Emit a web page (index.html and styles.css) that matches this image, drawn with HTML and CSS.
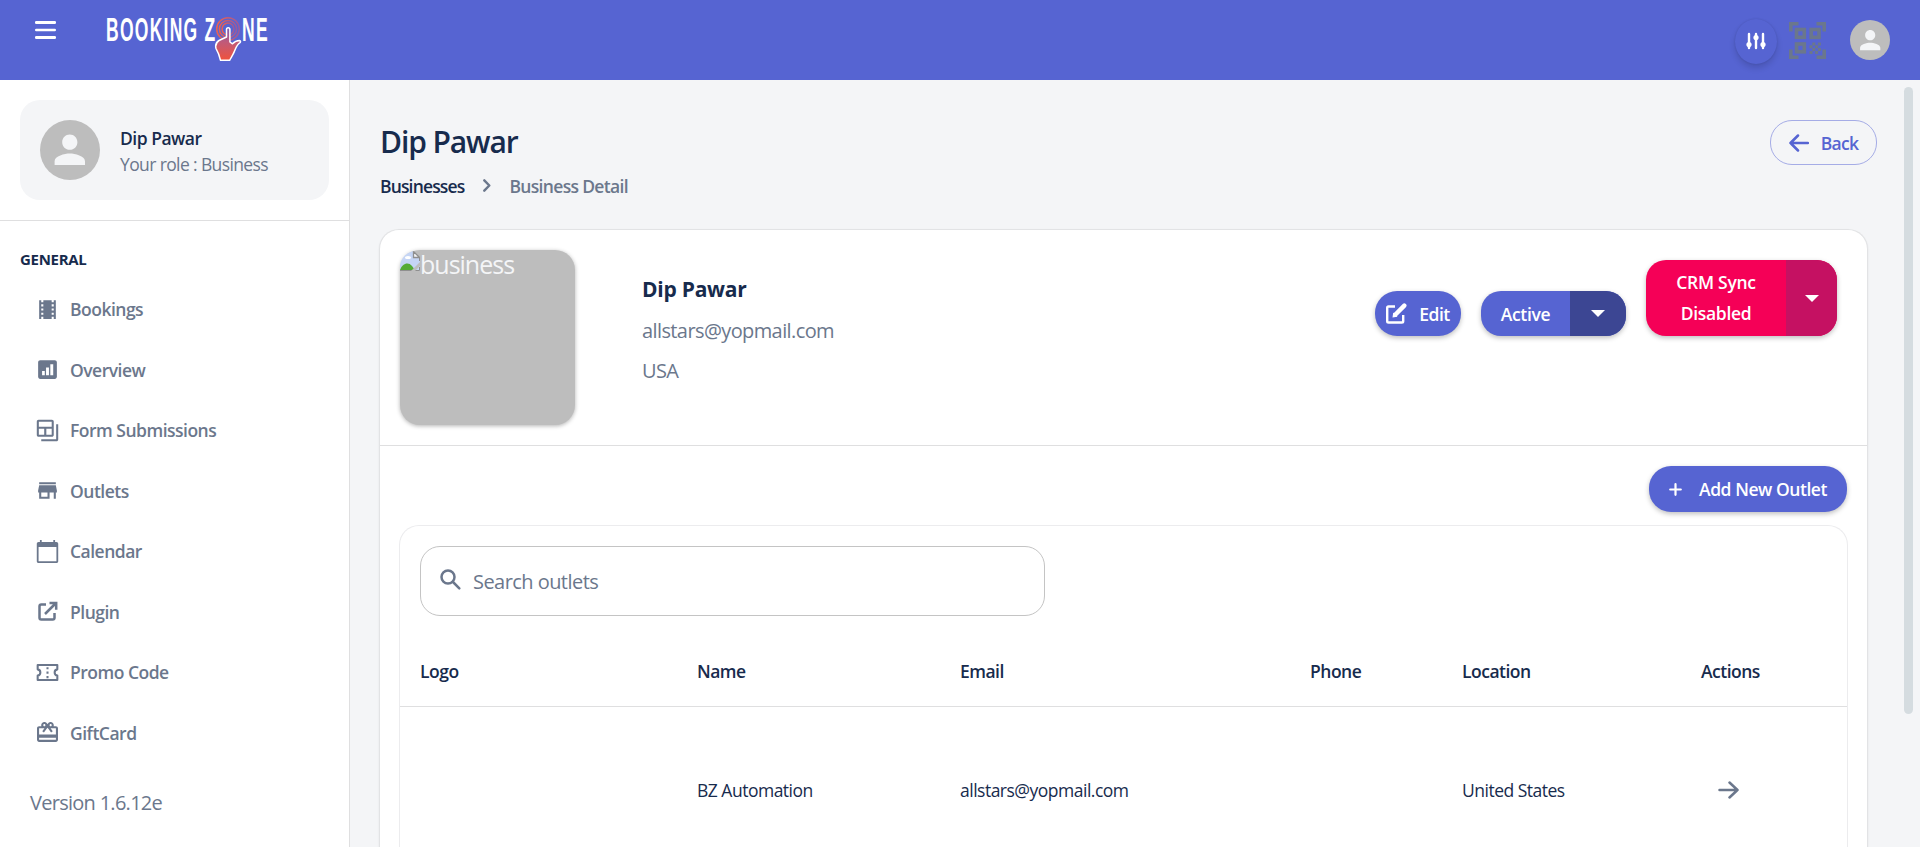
FILE: index.html
```html
<!DOCTYPE html>
<html lang="en">
<head>
<meta charset="utf-8">
<title>Booking Zone</title>
<link rel="stylesheet" href="styles.css">
</head>
<body>
<header class="topbar">
  <button class="menu-btn" aria-label="Menu"><svg width="21" height="19" viewBox="0 0 21 19" fill="#fff"><rect width="21" height="3" rx="1.2"/><rect y="7.7" width="21" height="2.6" rx="1.2"/><rect y="15" width="21" height="3" rx="1.2"/></svg></button>
  <div class="brand">
    <span class="brand-word">BOOKING Z</span>
    <svg class="brand-mark" width="28" height="46" viewBox="0 0 28 46" fill="none">
      <defs>
        <linearGradient id="ring" x1="0" x2="1"><stop offset="0" stop-color="#f0604d"/><stop offset="1" stop-color="#9a5a9c"/></linearGradient>
        <linearGradient id="hand" x1="0" y1="0" x2="0" y2="1"><stop offset="0" stop-color="#7c5cb8"/><stop offset=".45" stop-color="#c15a78"/><stop offset="1" stop-color="#f0523c"/></linearGradient>
      </defs>
      <g stroke="url(#ring)" stroke-width="1.500"><circle cx="14" cy="13" r="11.300"/><circle cx="14" cy="13" r="8.600"/><circle cx="14" cy="13" r="5.900"/></g>
      <path d="M12.500 13.500c0-2.400 3.400-2.400 3.400 0v12.500l2.600 1.800c2-2.200 4.600-3.300 7-3.300 1.200.2 1.200 1.500.5 2.100-3.200 2-4.200 5.400-5.700 9-1.200 3-3 5.500-4.700 8.700H6.500L4.600 38 2 32.500c-.8-3 .2-6.200 3-8l7.500-3.500z" fill="url(#hand)" stroke="#fff" stroke-width="1.500" stroke-linejoin="round"/>
    </svg>
    <span class="brand-word">NE</span>
  </div>
  <div class="top-actions">
    <button class="round-btn" aria-label="Settings"><svg width="20" height="18" viewBox="0 0 20 18" stroke="#fff" stroke-width="2.400" stroke-linecap="round" fill="#fff"><path d="M3 2v14M10 2v14M17 2v14"/><g stroke="none"><circle cx="3" cy="12.500" r="2.600"/><circle cx="10" cy="5.500" r="2.600"/><circle cx="17" cy="12.500" r="2.600"/></g></svg></button>
    <svg class="qr" width="37" height="37" viewBox="0 0 37 37" fill="none" stroke="#6b778c" stroke-width="3.600"><path d="M1.800 9.500V1.800H9.500M27.500 1.800h7.700V9.500M35.200 27.500v7.700h-7.700M9.500 35.200H1.800v-7.700"/><rect x="7.500" y="7.500" width="7.800" height="7.800"/><rect x="22.200" y="7.500" width="7.800" height="7.800"/><rect x="7.500" y="22" width="7.800" height="7.800"/><g fill="#6b778c" stroke="none"><path d="M23.300 20.500h3v3h-3zM28.900 20.500h3v3h-3zM20.500 23.300h3v3h-3zM26.100 23.300h3v3h-3zM23.300 26.100h3v3h-3zM28.900 26.100h3v3h-3zM26.100 28.900h3v3h-3zM20.500 28.900h3v3h-3z"/></g></svg>
    <div class="avatar avatar-sm"><svg viewBox="0 0 24 24" fill="currentColor"><path d="M12 12c2.210 0 4-1.790 4-4s-1.790-4-4-4-4 1.790-4 4 1.790 4 4 4zm0 2c-2.670 0-8 1.340-8 4v2h16v-2c0-2.660-5.330-4-8-4z"/></svg></div>
  </div>
</header>
<div class="shell">
  <aside class="sidebar">
    <div class="profile">
      <div class="avatar avatar-lg"><svg viewBox="0 0 24 24" fill="currentColor"><path d="M12 12c2.210 0 4-1.790 4-4s-1.790-4-4-4-4 1.790-4 4 1.790 4 4 4zm0 2c-2.670 0-8 1.340-8 4v2h16v-2c0-2.660-5.330-4-8-4z"/></svg></div>
      <div><div class="profile-name">Dip Pawar</div><div class="profile-role">Your role : Business</div></div>
    </div>
    <nav class="nav">
      <div class="nav-title">GENERAL</div>
      <a class="nav-item"><svg viewBox="0 0 24 24"><path d="M18 3v2h-2V3H8v2H6V3H4v18h2v-2h2v2h8v-2h2v2h2V3h-2zM8 17H6v-2h2v2zm0-4H6v-2h2v2zm0-4H6V7h2v2zm10 8h-2v-2h2v2zm0-4h-2v-2h2v2zm0-4h-2V7h2v2z"/></svg><span>Bookings</span></a>
      <a class="nav-item"><svg viewBox="0 0 24 24"><path fill-rule="evenodd" d="M19 3H5c-1.100 0-2 .9-2 2v14c0 1.100.9 2 2 2h14c1.100 0 2-.9 2-2V5c0-1.100-.9-2-2-2zM9.400 17.500H6.800v-4h2.600zM13.400 17.500h-2.800V10h2.800zM17.500 17.500h-2.800V7h2.800z"/></svg><span>Overview</span></a>
      <a class="nav-item"><svg viewBox="-2 -2 28 28"><path fill-rule="evenodd" d="M2 0h15c1.100 0 2 .9 2 2v15c0 1.100-.9 2-2 2H2c-1.100 0-2-.9-2-2V2C0 .9.900 0 2 0zm.3 2.300v5.400h14.400V2.300zm0 7.700v6.700h6V10zm8.400 0v6.700h6V10zM21.700 5H24v17c0 1.100-.9 2-2 2H5v-2.300h16.700z"/></svg><span>Form Submissions</span></a>
      <a class="nav-item"><svg viewBox="0 0 24 24"><path d="M20 4H4v2h16V4zm1 10v-2l-1-5H4l-1 5v2h1v6h10v-6h4v6h2v-6h1zm-9 4H6v-4h6v4z"/></svg><span>Outlets</span></a>
      <a class="nav-item"><svg viewBox="-2 -2 28 28"><path fill-rule="evenodd" d="M3.500-1h2v2.500h13V-1h2v2.500H22c1.100 0 2 .9 2 2V23c0 1.100-.9 2-2 2H2c-1.100 0-2-.9-2-2V3.500c0-1.100.9-2 2-2h1.500zM2 7v16h20V7z"/></svg><span>Calendar</span></a>
      <a class="nav-item"><svg class="line" viewBox="-.5 -.5 25 25" stroke-width="2.500"><path d="M10.500 5H5.800C4.700 5 4 5.700 4 6.800v11.400C4 19.300 4.700 20 5.800 20h11.400c1.100 0 1.800-.7 1.800-1.800v-4.700M9.500 14.500L20 4M14 3.500h6.700v6.700"/></svg><span>Plugin</span></a>
      <a class="nav-item"><svg class="line" viewBox="-2 -2 28 28" stroke-width="2.300"><path d="M1 3.500h22v5c-2 .3-3 1.700-3 3.500s1 3.200 3 3.500v5H1v-5c2-.3 3-1.700 3-3.500s-1-3.200-3-3.500z" stroke-linejoin="round"/><path d="M12 6v2.500M12 11v2.500M12 16v2.500"/></svg><span>Promo Code</span></a>
      <a class="nav-item"><svg class="gift" viewBox="2 2 20 20"><path d="M20 6h-2.180c.11-.31.18-.65.18-1 0-1.660-1.340-3-3-3-1.050 0-1.960.54-2.500 1.350l-.5.670-.5-.68C10.960 2.540 10.050 2 9 2 7.340 2 6 3.340 6 5c0 .35.070.69.180 1H4c-1.110 0-1.990.89-1.990 2L2 19c0 1.110.89 2 2 2h16c1.110 0 2-.89 2-2V8c0-1.110-.89-2-2-2zm-5-2c.55 0 1 .45 1 1s-.45 1-1 1-1-.45-1-1 .45-1 1-1zM9 4c.55 0 1 .45 1 1s-.45 1-1 1-1-.45-1-1 .45-1 1-1zm11 15H4v-2h16v2zm0-5H4V8h5.080L7 10.830 8.620 12 11 8.760l1-1.360 1 1.360L15.380 12 17 10.830 14.920 8H20v6z"/></svg><span>GiftCard</span></a>
    </nav>
    <div class="version">Version 1.6.12e</div>
  </aside>
  <main class="main">
    <div class="page-head">
      <div>
        <h1 class="page-title">Dip Pawar</h1>
        <div class="crumbs"><span class="crumb-link">Businesses</span><svg width="8" height="13" viewBox="0 0 8 13" fill="none" stroke="#6b778c" stroke-width="2.400" stroke-linecap="round" stroke-linejoin="round"><path d="M1.300 1.300l5 5.200-5 5.200"/></svg><span class="crumb-now">Business Detail</span></div>
      </div>
      <button class="btn-back"><svg width="20" height="18" viewBox="0 0 20 18" fill="none" stroke="currentColor" stroke-width="2.500" stroke-linecap="round" stroke-linejoin="round"><path d="M19 9H1.500M9 1.500L1.500 9 9 16.500"/></svg><span>Back</span></button>
    </div>
    <section class="card">
      <div class="business">
        <div class="thumb"><svg width="20" height="20" viewBox="0 0 20 20"><path d="M0 0h13l7 7v13H0z" fill="#c5d5f5"/><path d="M13.500 .5v6h6z" fill="#f4f5f7" stroke="#8f8f8f" stroke-width="1.300"/><path d="M19.500 6v4M19.500 16v3.500H0" fill="none" stroke="#8f8f8f"/><ellipse cx="8" cy="6.500" rx="3" ry="1.600" fill="#fff"/><path d="M0 19c2-6 8-9 12-4l3 4z" fill="#55ab35"/><path d="M11 20l9-9v4l-5 5z" fill="#bdbdbd"/></svg><span>business</span></div>
        <div class="info"><div class="info-name">Dip Pawar</div><div class="info-line info-mail">allstars@yopmail.com</div><div class="info-line">USA</div></div>
        <div class="actions">
          <button class="btn btn-edit"><svg width="21" height="21" viewBox="0 0 21 21" fill="none" stroke="#fff" stroke-width="2.400"><path d="M9 3.500H2.500c-.8 0-1.300.5-1.300 1.300v13.400c0 .8.500 1.300 1.300 1.300h13.400c.8 0 1.300-.5 1.300-1.300V12"/><path d="M9.500 11.500L18.300 2.600" stroke-width="4.400" stroke-linecap="round"/><path d="M6.500 14.500l.7-5 4.300 4.300z" fill="#fff" stroke="none"/></svg><span>Edit</span></button>
          <div class="split split-active"><button class="split-main">Active</button><button class="split-drop"><i class="caret"></i></button></div>
          <div class="split split-crm"><button class="split-main">CRM Sync<br>Disabled</button><button class="split-drop"><i class="caret"></i></button></div>
        </div>
      </div>
      <div class="outlets">
        <div class="outlets-bar"><button class="btn btn-add"><svg width="13" height="13" viewBox="0 0 13 13" stroke="#fff" stroke-width="2.200" stroke-linecap="round"><path d="M6.500 1.200v10.600M1.200 6.500h10.600"/></svg><span>Add New Outlet</span></button></div>
        <div class="panel">
          <div class="search"><svg width="21" height="21" viewBox="0 0 21 21" fill="none" stroke="#6b778c" stroke-width="2.500" stroke-linecap="round"><circle cx="8" cy="8" r="6.500"/><path d="M13 13l6.300 6.300"/></svg><span>Search outlets</span></div>
          <div class="row row-head"><div>Logo</div><div>Name</div><div>Email</div><div>Phone</div><div>Location</div><div>Actions</div></div>
          <div class="row row-body"><div></div><div>BZ Automation</div><div>allstars@yopmail.com</div><div></div><div>United States</div><div class="c-act"><svg width="21" height="18" viewBox="0 0 21 18" fill="none" stroke="#6b778c" stroke-width="2.500" stroke-linecap="round" stroke-linejoin="round"><path d="M1.500 9h18M11.500 1.500L19.500 9l-8 7.500"/></svg></div></div>
        </div>
      </div>
    </section>
    <div class="scrollbar"></div>
  </main>
</div>
</body>
</html>
```
FILE: styles.css
```css
* { box-sizing: border-box; }
body {
  margin: 0;
  height: 847px;
  overflow: hidden;
  display: flex;
  flex-direction: column;
  font-family: "Open Sans", "Noto Sans", sans-serif;
  font-size: 17.5px;
  letter-spacing: -.5px;
  color: #172b4d;
  background: #f4f5f7;
}
button { font: inherit; letter-spacing: inherit; border: 0; padding: 0; margin: 0; background: none; color: inherit; }
svg { display: block; flex: none; }

.topbar { flex: none; height: 80px; background: #5664d2; display: flex; padding: 0 30px 0 35px; }
.menu-btn { align-self: flex-start; margin-top: 21px; }
.brand { display: flex; margin-left: 50px; color: #fff; height: 62px; }
.brand-word { font: 700 33px/32px "Liberation Sans", sans-serif; letter-spacing: 2.4px; margin-top: 14px; width: 108px; white-space: nowrap; transform: scaleX(.53); transform-origin: 0 0; }
.brand-mark { margin: 16px 0 0; }
.top-actions { margin-left: auto; display: flex; align-items: center; }
.round-btn { width: 42px; height: 45px; border-radius: 50%; display: grid; place-items: center; margin: 2px 12px 0 0; box-shadow: 0 4px 6px rgba(0,0,0,.14), 0 0 2px rgba(0,0,0,.12); }
.qr { margin-right: 24px; }
.avatar { border-radius: 50%; background: #bdbdbd; color: #f4f5f7; display: grid; place-items: center; flex: none; }
.avatar svg { width: 76%; }
.avatar-sm { width: 40px; height: 40px; }
.avatar-lg { width: 60px; height: 60px; }

.shell { flex: 1; display: flex; min-height: 0; }
.sidebar { width: 350px; flex: none; background: #fff; border-right: 1px solid #dfdfe0; }
.profile { margin: 20px 20px 20px; height: 100px; border-radius: 20px; background: #f4f5f7; padding: 22px 20px 20px; display: flex; gap: 20px; align-items: center; line-height: 26px; }
.profile .avatar { margin-top: -2px; }
.profile-name { font-weight: 600; }
.profile-role { color: #6b778c; letter-spacing: -.62px; }
.nav { border-top: 1px solid #dfdfe0; padding: 26px 20px 0; color: #6b778c; }
.nav-title { font-size: 15px; font-weight: 700; line-height: 25px; color: #172b4d; letter-spacing: -.3px; }
.nav-item { display: flex; align-items: center; gap: 10px; height: 60.5px; padding-left: 15px; font-weight: 600; }
.nav-item:first-of-type { margin-top: 7px; }
.nav-item svg { width: 25px; height: 25px; fill: currentColor; overflow: visible; }
.nav-item svg.line { fill: none; stroke: currentColor; }
.nav-item svg.gift { width: 21px; height: 21px; margin: 0 2px; }
.version { font-size: 20px; letter-spacing: -.72px; color: #6b778c; padding-left: 30px; line-height: 30px; margin-top: 25px; }

.main { flex: 1; position: relative; padding: 40px 52px 0 29px; min-width: 0; }
.page-head { display: flex; justify-content: space-between; height: 109px; margin-right: -9px; }
.page-title { margin: 0 0 0 1px; font-size: 30px; line-height: 44px; font-weight: 600; letter-spacing: -1.1px; }
.crumbs { display: flex; align-items: center; margin-left: 1px; line-height: 26px; margin-top: 9px; font-weight: 600; }
.crumbs svg { margin: -2px 18px 0 19px; }
.crumb-link { letter-spacing: -.85px; }
.crumb-now { color: #6b778c; letter-spacing: -.67px; margin-top: -1px; }
.btn-back { height: 45px; width: 107px; border: 1px solid #a5ace6; border-radius: 22px; color: #5664d2; font-weight: 600; display: flex; align-items: center; justify-content: center; gap: 12px; letter-spacing: -.7px; }
.card { height: 618px; background: #fff; border: 1px solid #e2e3e5; border-bottom: 0; border-radius: 20px 20px 0 0; box-shadow: 0 1px 2px rgba(0,0,0,.08); }
.business { display: flex; height: 216px; border-bottom: 1px solid #dfdfe0; padding: 20px 30px 0 20px; }
.thumb { width: 175px; height: 175px; border-radius: 20px; background: #bdbdbd; box-shadow: 0 1px 4px rgba(0,0,0,.3); color: #f4f5f7; font-size: 25px; line-height: 28px; letter-spacing: -1px; display: flex; }
.thumb svg { border-top-left-radius: 16px; overflow: hidden; margin-top: 1px; }
.info { margin: 22px 0 0 67px; }
.info-name { font-size: 21px; font-weight: 700; line-height: 34px; letter-spacing: -.25px; }
.info-line { font-size: 20px; line-height: 40px; color: #6b778c; letter-spacing: -.6px; }
.info-mail { margin-top: 5px; }
.actions { margin-left: auto; display: flex; gap: 20px; align-items: flex-end; height: 86px; font-weight: 600; color: #fff; letter-spacing: -.3px; }
.btn { background: #5664d2; color: #fff; font-weight: 600; border-radius: 22px; display: flex; align-items: center; justify-content: center; box-shadow: 0 2px 5px rgba(0,0,0,.25); }
.btn-edit { width: 86px; height: 45px; gap: 12px; letter-spacing: -.5px; }
.split { display: flex; border-radius: 20px; overflow: hidden; box-shadow: 0 2px 5px rgba(0,0,0,.25); }
.split-active { width: 145px; height: 45px; background: #5664d2; }
.split-crm { width: 191px; height: 76px; background: #f50057; line-height: 31px; }
.split-main { flex: 1; }
.split-drop { display: grid; place-items: center; }
.split-active .split-drop { width: 56px; background: #3c4693; }
.split-crm .split-drop { width: 51px; background: #c51162; }
.caret { border: 7px solid transparent; border-top-color: #fff; border-bottom: 0; }
.outlets { padding: 20px 19px 0 19px; }
.outlets-bar { display: flex; justify-content: flex-end; padding-right: 1px; }
.btn-add { width: 198px; height: 46px; gap: 17px; letter-spacing: -.45px; }
.panel { margin-top: 13px; border: 1px solid #ececee; border-bottom: 0; border-radius: 20px 20px 0 0; height: 322px; padding-top: 20px; }
.search { width: 625px; height: 70px; border: 1px solid #c4c4c4; border-radius: 20px; margin-left: 20px; display: flex; align-items: center; padding-left: 19px; gap: 12px; font-size: 20px; color: #6b778c; letter-spacing: -.55px; }
.search svg { margin-top: -3px; }
.row { display: grid; grid-template-columns: 277px 263px 350px 152px 239px 1fr; padding-left: 20px; align-items: center; }
.row-head { height: 91px; border-bottom: 1px solid #dfdfe0; font-weight: 600; padding-top: 20px; }
.row-body { height: 166px; }
.c-act { padding-left: 17px; }
.scrollbar { position: absolute; left: 1554px; top: 7px; width: 9px; height: 627px; border-radius: 5px; background: #d5dce0; }
```
